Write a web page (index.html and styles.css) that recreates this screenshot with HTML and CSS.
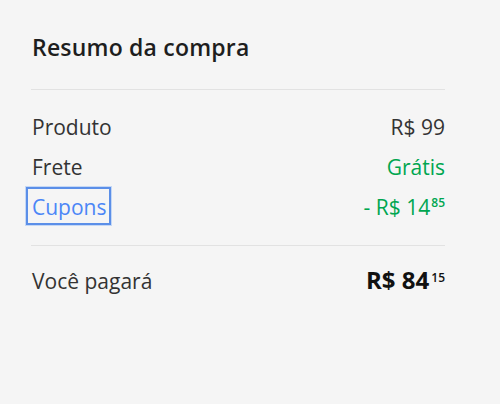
FILE: index.html
```html
<!DOCTYPE html>
<html lang="pt-BR">
<head>
<meta charset="utf-8">
<link rel="stylesheet" href="styles.css">
</head>
<body>
<section class="summary">
  <h2 class="title">Resumo da compra</h2>
  <hr class="divider">
  <div class="rows">
    <div class="row"><span>Produto</span><span>R$ 99</span></div>
    <div class="row"><span>Frete</span><span class="green">Grátis</span></div>
    <div class="row"><button class="coupon">Cupons</button><span class="green">- R$ 14<sup class="cents">85</sup></span></div>
  </div>
  <hr class="divider divider-2">
  <div class="row total"><span>Você pagará</span><span class="amount">R$ 84<sup class="cents">15</sup></span></div>
</section>
</body>
</html>
```
FILE: styles.css
```css
html, body { margin: 0; padding: 0; }
body {
  background: #f5f5f5;
  font-family: "Open Sans", sans-serif;
  color: #333;
  width: 500px;
  height: 404px;
}
.summary {
  width: 413px;
  padding: 33px 0 0 32px;
}
.title {
  margin: 0;
  font-size: 23px;
  line-height: 28px;
  font-weight: 600;
  color: #1e1e1e;
  letter-spacing: 0.2px;
}
.divider {
  border: 0;
  height: 1px;
  background: #e2e2e2;
  margin: 28px 0 25px -1px;
}
.divider-2 { margin-top: 26px; margin-bottom: 20px; }
.rows { display: flex; flex-direction: column; gap: 16px; }
.row {
  display: flex;
  justify-content: space-between;
  align-items: center;
  font-size: 21px;
  line-height: 24px;
}
.green { color: #00a650; }
.coupon {
  position: relative;
  font: inherit;
  color: #4b86f7;
  background: none;
  border: 0;
  padding: 0;
  line-height: 24px;
}
.coupon::after {
  content: "";
  position: absolute;
  left: -6px; right: -5px; top: -8px; bottom: -6px;
  border: 2px solid #5b8fe8;
  box-shadow: 0 0 0 1px #c5d8f5;
}
.cents {
  font-size: 12px;
  font-weight: 600;
  vertical-align: top;
  line-height: 14px;
  margin-left: 1px;
  position: relative;
  top: 1px;
}
.total { align-items: baseline; line-height: 28px; }
.amount { font-weight: 700; font-size: 24px; color: #111; }
.amount .cents { font-size: 12px; line-height: 16px; top: 4px; margin-left: 2px; }
```
